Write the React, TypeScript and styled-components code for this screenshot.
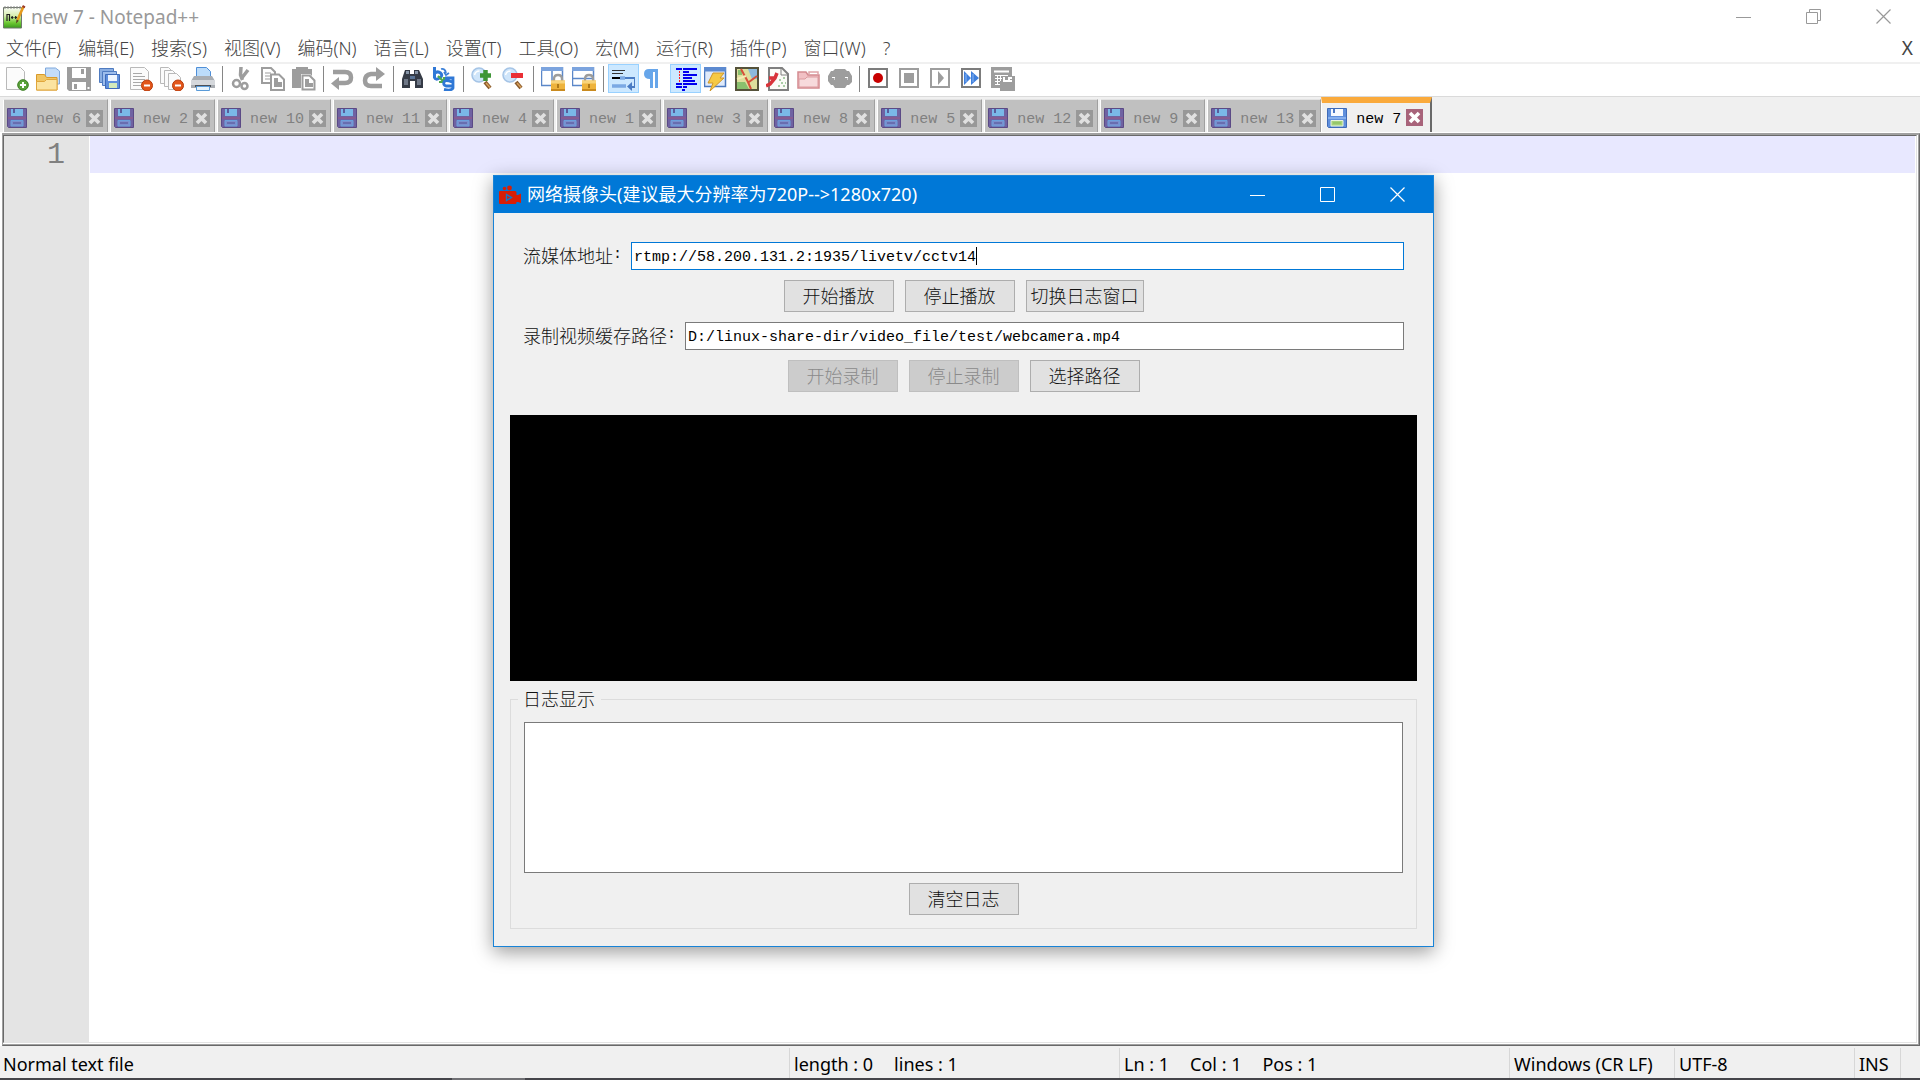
import React, { useState } from "react";
import styled, { createGlobalStyle } from "styled-components";

const uiFont = `"Noto Sans", "Noto Sans CJK SC", sans-serif`;
const cjkFont = `"Noto Sans CJK SC", sans-serif`;
const monoFont = `"Liberation Mono", "Noto Sans CJK SC", monospace`;

const GlobalStyle = createGlobalStyle`
  *, *::before, *::after { box-sizing: border-box; }
  body { margin: 0; background: #fff; }
  button, input, textarea { font: inherit; color: inherit; margin: 0; padding: 0; border: 0; border-radius: 0; outline: 0; background: none; }
  svg { display: block; }
`;

/* ---------- main window ---------- */

const Desktop = styled.div`
  position: relative;
  display: flex;
  flex-direction: column;
  min-height: 100vh;
  overflow: hidden;
  font-family: ${uiFont};
  background: #fff;
`;

const TitleBar = styled.header`
  display: flex;
  align-items: center;
  height: 36px;
  padding: 0 1px 2px 2px;
  color: #999;
`;

const WindowTitle = styled.h1`
  flex: 1;
  margin: 0;
  padding-left: 5px;
  font-size: 19px;
  font-weight: 400;
  line-height: 26px;
  white-space: nowrap;
`;

const CaptionButton = styled.button`
  display: grid;
  place-items: center;
  width: 70px;
  height: 34px;
`;

const MenuBar = styled.nav`
  display: flex;
  align-items: center;
  height: 28px;
  padding: 0 7px 2px 0;
  border-bottom: 2px solid #f0f0f0;
  font-size: 18px;
  font-weight: 300;
  color: #444;
`;

const MenuItem = styled.button`
  padding: 0 11px 0 6px;
  line-height: 24px;
  white-space: nowrap;
`;

const CloseDocument = styled.button`
  margin-left: auto;
  font-size: 19px;
  font-weight: 400;
  line-height: 24px;
`;

const ToolBar = styled.div`
  display: flex;
  height: 33px;
  padding-left: 2px;
  border-bottom: 1px solid #dadada;
`;

const ToolButton = styled.button<{ $active?: boolean }>`
  width: 31px;
  height: 29px;
  padding: 2px 3px 1px 2px;
  border: 1px solid ${(p) => (p.$active ? "#99d1ff" : "transparent")};
  background: ${(p) => (p.$active ? "#cce8ff" : "transparent")};
`;

const ToolDivider = styled.span`
  width: 1px;
  height: 26px;
  margin: 2px 4px 0 3px;
  background: #868686;
`;

const TabStrip = styled.div`
  display: flex;
  align-items: flex-end;
  height: 36px;
  padding-left: 3px;
  border-bottom: 1px solid #fff;
  background: #f0f0f0;
`;

const Tab = styled.div<{ $active?: boolean }>`
  display: flex;
  align-items: center;
  height: ${(p) => (p.$active ? 35 : 33)}px;
  margin: ${(p) => (p.$active ? "0 0 0 -2px" : "0 2px 0 0")};
  padding: ${(p) => (p.$active ? "0 7px 0 5px" : "4px 4px 0 3px")};
  border-left: 1px solid #fff;
  border-right: ${(p) => (p.$active ? "2px solid #696969" : "1px solid #a0a0a0")};
  border-top: ${(p) => (p.$active ? "6px solid #faaa3c" : "1px solid #e3e3e3")};
  background: ${(p) => (p.$active ? "#f0f0f0" : "#c0c0c0")};
`;

const TabLabel = styled.button<{ $active?: boolean }>`
  display: flex;
  align-items: center;
  gap: 9px;
  font-family: ${monoFont};
  font-size: 15px;
  line-height: 20px;
  white-space: pre;
  color: ${(p) => (p.$active ? "#000" : "#808080")};
`;

const TabName = styled.span`
  padding-top: 4px;
`;

const TabClose = styled.button`
  margin-left: 5px;
`;

const EditorFrame = styled.main`
  display: flex;
  flex: 1;
  margin-left: 2px;
  padding: 0 2px 2px 0;
  border-style: solid;
  border-width: 2px 1px 1px 1px;
  border-color: #a0a0a0 #696969 #696969 #a0a0a0;
  box-shadow: inset -1px -1px 0 #a0a0a0;
`;

const EditorPane = styled.div`
  display: flex;
  flex: 1;
  border: 1px solid;
  border-color: #696969 #e3e3e3 #e3e3e3 #696969;
`;

const Gutter = styled.div`
  width: 85px;
  padding: 1px 24px 0 0;
  background: #e4e4e4;
  color: #808080;
  font-family: ${monoFont};
  font-size: 30px;
  line-height: 37px;
  text-align: right;
`;

const EditorText = styled.textarea`
  flex: 1;
  margin: 0 1px;
  resize: none;
  background: linear-gradient(#e8e8ff 37px, #fff 37px);
  font-family: ${monoFont};
  font-size: 30px;
  line-height: 37px;
`;

const StatusBar = styled.footer`
  display: grid;
  grid-template-columns: 1fr 330px 390px 165px 180px 46px 19px;
  height: 32px;
  padding-top: 2px;
  background: #f0f0f0;
  color: #000;
  font-size: 18px;
  line-height: 32px;
`;

const StatusCell = styled.div`
  display: flex;
  gap: 21px;
  padding-left: 3px;
  border-right: 1px solid #d7d7d7;
  white-space: nowrap;
  & + & { padding-left: 4px; }
  &:last-child { border-right: 0; }
`;

const TaskBarEdge = styled.div`
  height: 2px;
  padding-left: 452px;
  background: #45454a;
  &::before { content: ""; display: block; width: 73px; height: 2px; background: #707074; }
`;

/* ---------- camera dialog ---------- */

const Dialog = styled.section`
  position: absolute;
  left: 493px;
  top: 175px;
  width: 941px;
  border: 1px solid #1883d7;
  background: #f0f0f0;
  box-shadow: 0 5px 18px rgba(0, 0, 0, 0.4);
  color: #111;
`;

const DialogTitleBar = styled.header`
  display: flex;
  align-items: center;
  height: 37px;
  padding-left: 4px;
  background: #0078d7;
  color: #fff;
`;

const DialogTitle = styled.h2`
  flex: 1;
  margin: 0;
  padding: 0 0 2px 5px;
  font-size: 18px;
  font-weight: 400;
  line-height: 26px;
  white-space: nowrap;
`;

const DialogBody = styled.div`
  display: flex;
  flex-direction: column;
  padding: 29px 16px 17px;
`;

const Form = styled.form`
  display: flex;
  flex-direction: column;
  gap: 10px;
  padding: 0 13px;
`;

const FieldRow = styled.div`
  display: flex;
  align-items: center;
  gap: 9px;
  height: 28px;
  font-family: ${monoFont};
  font-size: 15px;
`;

const FieldLabel = styled.label`
  display: flex;
  align-items: center;
  padding-bottom: 2px;
  line-height: 26px;
  white-space: nowrap;
`;

const LabelText = styled.span`
  font-family: ${cjkFont};
  font-size: 18px;
  font-weight: 300;
`;

const FieldBox = styled.div`
  position: relative;
  flex: 1;
`;

const TextInput = styled.input<{ $focused?: boolean }>`
  display: block;
  width: 100%;
  height: 28px;
  padding: 2px 2px 0;
  border: 1px solid ${(p) => (p.$focused ? "#0078d7" : "#7a7a7a")};
  background: #fff;
  color: #000;
  caret-color: transparent;
`;

const Caret = styled.span<{ $column: number }>`
  position: absolute;
  top: 5px;
  left: calc(3px + ${(p) => p.$column}ch);
  width: 1px;
  height: 18px;
  background: #000;
`;

const ButtonRow = styled.div`
  display: flex;
  justify-content: center;
  gap: 11px;
`;

const PushButton = styled.button`
  min-width: 110px;
  height: 32px;
  padding: 0 4px 2px;
  border: 1px solid #adadad;
  background: #e1e1e1;
  font-family: ${cjkFont};
  font-size: 18px;
  font-weight: 300;
  line-height: 26px;
  white-space: nowrap;
  &:disabled {
    border-color: #bfbfbf;
    background: #ccc;
    color: #8a8a8a;
  }
`;

const VideoView = styled.div`
  height: 266px;
  margin-top: 23px;
  background: #000;
`;

const LogGroup = styled.fieldset`
  display: flex;
  flex-direction: column;
  gap: 10px;
  min-width: 0;
  margin: 4px 0 0;
  padding: 9px 13px 13px;
  border: 1px solid #dcdcdc;
`;

const LogLegend = styled.legend`
  margin-left: -6px;
  padding: 0 6px 2px 5px;
  font-family: ${cjkFont};
  font-size: 18px;
  font-weight: 300;
  line-height: 26px;
`;

const LogText = styled.textarea`
  display: block;
  width: 100%;
  height: 151px;
  border: 1px solid #7a7a7a;
  background: #fff;
  resize: none;
`;

/* ---------- icons ---------- */

const Glyph = ({ size = 24, children }: { size?: number; children: React.ReactNode }) => (
  <svg width={size} height={size} viewBox={`0 0 ${size} ${size}`} fill="none" aria-hidden="true">
    {children}
  </svg>
);

const MinimizeIcon = () => (
  <Glyph size={16}><path d="M0 8.5H15" stroke="currentColor" /></Glyph>
);
const MaximizeIcon = () => (
  <Glyph size={16}><path d="M.5.5h14v14H.5z" stroke="currentColor" /></Glyph>
);
const RestoreIcon = () => (
  <Glyph size={16}><path d="M.5 3.5h11v11H.5zM3.5 3.5v-3h11v11h-3" stroke="currentColor" /></Glyph>
);
const CloseIcon = () => (
  <Glyph size={16}><path d="M.5.5l14 14M14.500.5l-14 14" stroke="currentColor" strokeWidth="1.2" /></Glyph>
);

const NotepadLogo = () => (
  <Glyph size={24}>
    <defs>
      <linearGradient id="padGreen" x1="0" y1="0" x2="0" y2="1">
        <stop offset="0" stopColor="#f8fbf4" />
        <stop offset=".4" stopColor="#d8efb0" />
        <stop offset=".75" stopColor="#6cc832" />
        <stop offset="1" stopColor="#3a9a1c" />
      </linearGradient>
    </defs>
    <path d="M1.500 2.500h18v20.500h-18z" fill="url(#padGreen)" stroke="#6f776b" />
    <path d="M3 1v3M6 1v3M9 1v3M12 1v3M15 1v3M18 1v3" stroke="#8d8d8d" />
    <path d="M5 16V9.500h2.500V16M9 12.500h2.500M10.200 11v3M12.500 12.500h2.500M13.700 11v3" stroke="#222" strokeWidth="1.200" />
    <path d="M21.500 1.500L15.500 15" stroke="#e69b1e" strokeWidth="2.600" />
    <path d="M20.500 1l2.500 1.300" stroke="#9b3a2a" strokeWidth="2" />
    <path d="M14 18.500l.5-4 2.300 1.200z" fill="#5a4020" />
  </Glyph>
);

const CameraLogo = () => (
  <Glyph size={24}>
    <circle cx="6.500" cy="5.500" r="1.800" fill="#d81e06" />
    <circle cx="11.500" cy="5" r="2.400" fill="#d81e06" />
    <path d="M2 8h15q1.500 0 1.500 1.500V12h1.500l3-1.500v9.500l-3-1h-1.500v.500q0 1.500-1.500 1.500H2q-1 0-1-1V9q0-1 1-1z" fill="#d81e06" />
    <path d="M8.500 11.500v6l5-3z" stroke="#1478c8" strokeWidth="1.400" />
  </Glyph>
);

const Floppy = ({ active }: { active?: boolean }) => (
  <Glyph size={20}>
    <path d="M.5.5h19v19H1.500l-1-1z" fill={active ? "#5f8fdc" : "#6f62a2"} stroke={active ? "#3f6bb8" : "#5b4a86"} />
    <path d="M4 1h12v7H4z" fill={active ? "#f6faff" : "#7ab8e8"} />
    <path d="M6 1h2v4H6z" fill={active ? "#4c78c4" : "#5a5c9c"} />
    <path d="M1 9h18v2H1z" fill={active ? "#86b0ee" : "#855c92"} />
    <path d="M4 12.500h12V18H4z" fill={active ? "#a6d27c" : "#7a8fce"} stroke={active ? "#e9f4dc" : "#6aa0dc"} />
    <path d="M6 15h8" stroke={active ? "#86bb58" : "#574c90"} />
  </Glyph>
);

const TabCross = ({ active }: { active?: boolean }) => (
  <Glyph size={17}>
    <path d="M0 0h17v17H0z" fill={active ? "#a8637a" : "#989898"} />
    <path d="M4 4l9 9M13 4l-9 9" stroke={active ? "#fff" : "#e0e0e0"} strokeWidth="3.600" />
  </Glyph>
);

const sheet = (x: number, y: number, w: number, h: number) => (
  <path d={`M${x + 0.5} ${y + 0.5}h${w - 5}l4 4v${h - 5}h-${w - 1}z`} fill="#fbfbfb" stroke="#b9b9b9" />
);

const minusBadge = (
  <>
    <circle cx="18" cy="18.500" r="5.500" fill="#e2561b" stroke="#b83c0c" />
    <path d="M15 18.500h6" stroke="#fff" strokeWidth="2" />
  </>
);

const lens = (
  <>
    <path d="M14 15l5 6" stroke="#8a5a2b" strokeWidth="4" />
    <path d="M15 16l4 4.500" stroke="#d8a25e" strokeWidth="1.500" />
    <circle cx="8" cy="8" r="7" fill="#cfe5fa" stroke="#a5c4e6" strokeWidth="1.500" />
    <path d="M3.500 8q1-4 5-4" stroke="#fff" strokeWidth="1.500" />
  </>
);

const lock = (
  <>
    <path d="M13 15v-3q0-4 4-4t4 4v3" stroke="#9c9c9c" strokeWidth="2.300" />
    <path d="M10 13.500h14V24H10z" fill="#eeb33c" />
    <path d="M10 13.500h14v3H10z" fill="#f8d47c" />
    <path d="M10 22h14v2H10z" fill="#c98a1e" />
    <path d="M17 17v4" stroke="#b07a18" strokeWidth="2" />
  </>
);

const frameBox = (color: string) => (
  <path d="M2 2h18v18H2z" fill="#fff" stroke={color} strokeWidth="2" />
);

const toolIcons: Record<string, React.ReactNode> = {
  new: (
    <>
      {sheet(1, 0, 19, 23)}
      <circle cx="18" cy="18" r="5.300" fill="#5aa13a" stroke="#3b7d22" />
      <path d="M15 18h6M18 15v6" stroke="#fff" strokeWidth="2" />
    </>
  ),
  open: (
    <>
      <path d="M9.500 1h10l4 3v13h-14z" fill="#c4dcf8" stroke="#7fa8dc" />
      <path d="M.5 7.500h8l2 3H21V23H.5z" fill="#f0c564" stroke="#d99a2b" />
      <path d="M.5 14.500h8l2-2h10.500V23H.5z" fill="#fbe3a0" stroke="#e0a63c" />
    </>
  ),
  save: (
    <>
      <path d="M0 0h24v24H2l-2-2z" fill="#9d9d9d" />
      <path d="M5 1h14v10H5zM5 15h14v8H5z" fill="#fff" />
      <path d="M14 2h3v5h-3zM7 17h3v5H7z" fill="#9d9d9d" />
      <path d="M20.500 20h2v2h-2z" fill="#fff" />
    </>
  ),
  saveAll: (
    <>
      <path d="M1.500 1.500h14v14h-14z" fill="#8aaee2" stroke="#4f7bc0" />
      <path d="M4.500 4.500h14v14h-14z" fill="#9dbdec" stroke="#4f7bc0" />
      <path d="M7.500 7.500h14v14h-14z" fill="#5f8fdc" stroke="#3f6bb8" />
      <path d="M10 8h9v6h-9z" fill="#eef5ff" />
      <path d="M11 16h8v5h-8z" fill="#d4ebbb" />
    </>
  ),
  close: (
    <>
      {sheet(1, 0, 19, 23)}
      <path d="M4 6.500h9M4 9.500h12M4 12.500h12M4 15.500h9M4 18.500h8" stroke="#a8a8a8" />
      {minusBadge}
    </>
  ),
  closeAll: (
    <>
      {sheet(0, 0, 13, 17)}
      {sheet(4, 3, 13, 17)}
      {sheet(8, 6, 13, 17)}
      {minusBadge}
    </>
  ),
  print: (
    <>
      <path d="M5.500.5h10l4 4V12h-14z" fill="#bcdcfa" stroke="#4f8fd8" />
      <path d="M3 9h18l3 5v7H0v-7z" fill="#a9adb2" />
      <path d="M0 13h24v5H0z" fill="#d5d8dc" />
      <path d="M4 18h16v2H4z" fill="#4c5056" />
      <path d="M5.500 19.500h13v4h-13z" fill="#e6f3fd" stroke="#5a9bd8" />
    </>
  ),
  cut: (
    <>
      <path d="M11 0l-.5 8 2 5M18 3l-7 9" stroke="#9d9d9d" strokeWidth="3.500" />
      <circle cx="6.500" cy="16.500" r="3.500" stroke="#9d9d9d" strokeWidth="2.500" />
      <circle cx="14.500" cy="19" r="3" stroke="#9d9d9d" strokeWidth="2.500" />
    </>
  ),
  copy: (
    <>
      <path d="M1 1h9l4 4v11H1z" fill="#fff" stroke="#9d9d9d" strokeWidth="2" />
      <path d="M4 6h6M4 9h6M4 12h6" stroke="#9d9d9d" />
      <path d="M10 7.500h8l5 5V23H10z" fill="#fff" stroke="#9d9d9d" strokeWidth="2" />
      <path d="M13 11h4v4h4v5h-8z" fill="#9d9d9d" />
    </>
  ),
  paste: (
    <>
      <path d="M0 2h4V0h12v2h4v19H0z" fill="#9d9d9d" />
      <path d="M9 7h9l6 6v11H9z" fill="#fff" />
      <path d="M10.500 8.500h7l5 5v9h-12z" stroke="#9d9d9d" strokeWidth="2" />
      <path d="M13 12h4v4h4v4h-8z" fill="#9d9d9d" />
    </>
  ),
  undo: (
    <>
      <path d="M2 5h12q6 0 6 5.500T14 16H7" stroke="#9d9d9d" strokeWidth="4.500" />
      <path d="M8 10v13l-8-6.500z" fill="#9d9d9d" />
    </>
  ),
  redo: (
    <>
      <path d="M20 19H9q-6 0-6-5.500T9 7h6" stroke="#9d9d9d" strokeWidth="4.500" />
      <path d="M14 0v14l9-7z" fill="#9d9d9d" />
    </>
  ),
  find: (
    <>
      <path d="M4 3h5v4h4V3h5l4 9v9h-8v-7H9v7H1v-9z" fill="#353b46" />
      <path d="M5 4h3v3H5zM14 4h3v3h-3z" fill="#8795a8" />
      <path d="M3 12h4v6H3zM16 12h4v6h-4z" fill="#6f7887" />
      <path d="M9 9h5v3H9z" fill="#5a7496" />
    </>
  ),
  replace: (
    <>
      <path d="M2.500 0v11M2.500 6.500q3-3 6-.5t-1 5-5-.5" stroke="#2f78d6" strokeWidth="3" />
      <path d="M9 2q4-1 5 4M12 5l2 3 3-2" stroke="#3a7fd8" strokeWidth="1.800" />
      <path d="M6 9l6 6M12 10v5H7" stroke="#4faa4f" strokeWidth="2.200" />
      <path d="M13 11h8v10q-1 3-9 1.500M20 19h-6q-3-1-2-4t8 0" stroke="#2f78d6" strokeWidth="2.800" />
    </>
  ),
  zoomIn: (
    <>
      {lens}
      <path d="M14.500 3v11M9 8.500h11" stroke="#3f9637" strokeWidth="4.500" />
    </>
  ),
  zoomOut: (
    <>
      {lens}
      <path d="M9 8.500h12" stroke="#ea2f35" strokeWidth="5" />
    </>
  ),
  syncV: (
    <>
      <path d="M.5.5h21v18H.5zM11 4v14" fill="#fff" stroke="#5b87c8" strokeWidth="1.500" />
      <path d="M0 0h22v4H0z" fill="#7ca4de" />
      {lock}
    </>
  ),
  syncH: (
    <>
      <path d="M.5.5h21v18H.5zM1 11.500h20" fill="#fff" stroke="#5b87c8" strokeWidth="1.500" />
      <path d="M0 0h22v4H0z" fill="#7ca4de" />
      {lock}
    </>
  ),
  wrap: (
    <>
      <path d="M1 3.500h13M1 6.500h11" stroke="#333" />
      <path d="M1 11h8" stroke="#000" strokeWidth="2" />
      <path d="M9 11h5M1 19h14" stroke="#7ba9e4" strokeWidth="3.500" />
      <path d="M14 11h10v9h-5" stroke="#4a7cc4" strokeWidth="2" />
      <path d="M21 15v9l-5-4.500z" fill="#4a7cc4" />
    </>
  ),
  pilcrow: (
    <path d="M7 2h9v19h-3V5h-2v16H8v-9q-6 0-6-5t5-5z" fill="#67a6ea" />
  ),
  indent: (
    <>
      <path d="M3 2h6M10 2h14M10 5h6M10 8h14M10 11h9M10 14h12M3 17h6M10 17h14M3 20h6M10 20h4M9 23h3" stroke="#0000f0" strokeWidth="2.200" />
      <path d="M6.500 4v12" stroke="#f22" strokeDasharray="2 1" />
    </>
  ),
  language: (
    <>
      <path d="M.5.5h21v19H.5z" fill="#dfeafa" stroke="#4a78be" strokeWidth="1.500" />
      <path d="M0 0h22v4.500H0z" fill="#5c8ad0" />
      <path d="M9 6h11l-4 5h4L6 24l3-8H4z" fill="#f6c944" stroke="#cf962a" />
    </>
  ),
  map: (
    <>
      <path d="M1 1h22v22H1z" fill="#dede9c" stroke="#55523a" strokeWidth="2" />
      <path d="M13 2h9v10h-5z" fill="#8db9dc" />
      <path d="M2 15h8l4 7H2zM3 3h4v5H3z" fill="#8ac06e" />
      <path d="M6 2l7 13 3 7M14 15l8-6" stroke="#d6503a" strokeWidth="2" />
      <path d="M2 12l9-3" stroke="#f4edb4" strokeWidth="2" />
    </>
  ),
  functions: (
    <>
      <path d="M3 1h13l6 6v16H3z" fill="#fbfbf7" stroke="#808080" strokeWidth="2" />
      <path d="M15 1v7h7" stroke="#808080" />
      <path d="M11 6l-2 5-5 6-4 2M3 11h7" stroke="#d8343a" strokeWidth="3.500" />
      <path d="M13 13h2M17 11h2M15 16h2M19 16h1M12 19h2M17 19h2" stroke="#8fbe8a" strokeWidth="1.500" />
    </>
  ),
  folder: (
    <>
      <path d="M1 5h8l2 3h11v13H1z" fill="#f1c0c4" stroke="#d48a90" strokeWidth="1.500" />
      <path d="M12 7V5h9v3" stroke="#e0a5a9" strokeWidth="1.500" />
      <path d="M2 12h6l2-2h11v10H2z" fill="#f7dadc" stroke="#dc9ba0" />
    </>
  ),
  monitor: (
    <>
      <path d="M7 2h10l2 2h2l3 5v6l-3 3h-2l-2 3H7l-2-3H3l-3-4V9l3-5h2z" fill="#9d9d9d" />
      <path d="M4 10.500h3M17 10.500h3M6 12h1M19 12h1" stroke="#fff" />
    </>
  ),
  record: (
    <>
      {frameBox("#7c7c7c")}
      <circle cx="11" cy="11" r="5" fill="#c80000" />
    </>
  ),
  stop: (
    <>
      {frameBox("#9d9d9d")}
      <path d="M6 6h10v10H6z" fill="#9d9d9d" />
    </>
  ),
  play: (
    <>
      {frameBox("#9d9d9d")}
      <path d="M9 4l6 7-6 7z" fill="#9d9d9d" />
    </>
  ),
  playMany: (
    <>
      {frameBox("#7c7c7c")}
      <path d="M4 4l7 7-7 7zM11 4l8 7-8 7z" fill="#3f7fdc" />
      <path d="M6 7v8M13 7v8" stroke="#8db8f2" />
    </>
  ),
  saveMacro: (
    <>
      <path d="M0 0h21v9h3v15H9v-3H0z" fill="#9d9d9d" />
      <path d="M3 4.500h15" stroke="#fff" strokeWidth="2" />
      <path d="M4 8.500h13M4 11.500h7M4 14.500h5M4 17.500h5M6.500 8v10M9.500 8v6" stroke="#fff" />
      <path d="M12 10h9v5h-9z" fill="#fff" />
      <path d="M14 10h3v3h-3zM19 12h2v1h-2z" fill="#9d9d9d" />
    </>
  ),
};

const toolGroups: { name: string; label: string; active?: boolean }[][] = [
  [
    { name: "new", label: "新建" },
    { name: "open", label: "打开" },
    { name: "save", label: "保存" },
    { name: "saveAll", label: "保存所有" },
    { name: "close", label: "关闭" },
    { name: "closeAll", label: "关闭所有" },
    { name: "print", label: "打印" },
  ],
  [
    { name: "cut", label: "剪切" },
    { name: "copy", label: "复制" },
    { name: "paste", label: "粘贴" },
  ],
  [
    { name: "undo", label: "撤销" },
    { name: "redo", label: "重做" },
  ],
  [
    { name: "find", label: "查找" },
    { name: "replace", label: "替换" },
  ],
  [
    { name: "zoomIn", label: "放大" },
    { name: "zoomOut", label: "缩小" },
  ],
  [
    { name: "syncV", label: "同步垂直滚动" },
    { name: "syncH", label: "同步水平滚动" },
  ],
  [
    { name: "wrap", label: "自动换行", active: true },
    { name: "pilcrow", label: "显示所有字符" },
    { name: "indent", label: "显示缩进参考线", active: true },
    { name: "language", label: "自定义语言" },
    { name: "map", label: "文档结构图" },
    { name: "functions", label: "函数列表" },
    { name: "folder", label: "文件夹工作区" },
    { name: "monitor", label: "监视日志" },
  ],
  [
    { name: "record", label: "开始录制宏" },
    { name: "stop", label: "停止录制宏" },
    { name: "play", label: "播放宏" },
    { name: "playMany", label: "多次运行宏" },
    { name: "saveMacro", label: "保存宏" },
  ],
];

const menus = [
  "文件(F)", "编辑(E)", "搜索(S)", "视图(V)", "编码(N)", "语言(L)", "设置(T)",
  "工具(O)", "宏(M)", "运行(R)", "插件(P)", "窗口(W)", "?",
];

const tabs = [6, 2, 10, 11, 4, 1, 3, 8, 5, 12, 9, 13, 7];
const currentTab = 7;

function CameraDialog() {
  const [address, setAddress] = useState("rtmp://58.200.131.2:1935/livetv/cctv14");
  const [path, setPath] = useState("D:/linux-share-dir/video_file/test/webcamera.mp4");

  return (
    <Dialog role="dialog" aria-labelledby="camera-title">
      <DialogTitleBar>
        <CameraLogo />
        <DialogTitle id="camera-title">网络摄像头(建议最大分辨率为720P--&gt;1280x720)</DialogTitle>
        <CaptionButton aria-label="最小化"><MinimizeIcon /></CaptionButton>
        <CaptionButton aria-label="最大化"><MaximizeIcon /></CaptionButton>
        <CaptionButton aria-label="关闭"><CloseIcon /></CaptionButton>
      </DialogTitleBar>
      <DialogBody>
        <Form onSubmit={(e) => e.preventDefault()}>
          <FieldRow>
            <FieldLabel htmlFor="address"><LabelText>流媒体地址</LabelText>:</FieldLabel>
            <FieldBox>
              <TextInput id="address" $focused value={address} onChange={(e) => setAddress(e.target.value)} />
              <Caret $column={address.length} />
            </FieldBox>
          </FieldRow>
          <ButtonRow>
            <PushButton type="button">开始播放</PushButton>
            <PushButton type="button">停止播放</PushButton>
            <PushButton type="button">切换日志窗口</PushButton>
          </ButtonRow>
          <FieldRow>
            <FieldLabel htmlFor="path"><LabelText>录制视频缓存路径</LabelText>:</FieldLabel>
            <FieldBox>
              <TextInput id="path" value={path} onChange={(e) => setPath(e.target.value)} />
            </FieldBox>
          </FieldRow>
          <ButtonRow>
            <PushButton type="button" disabled>开始录制</PushButton>
            <PushButton type="button" disabled>停止录制</PushButton>
            <PushButton type="button">选择路径</PushButton>
          </ButtonRow>
        </Form>
        <VideoView />
        <LogGroup>
          <LogLegend>日志显示</LogLegend>
          <LogText aria-label="日志显示" readOnly />
          <ButtonRow>
            <PushButton type="button">清空日志</PushButton>
          </ButtonRow>
        </LogGroup>
      </DialogBody>
    </Dialog>
  );
}

export default function App() {
  return (
    <Desktop>
      <GlobalStyle />
      <TitleBar>
        <NotepadLogo />
        <WindowTitle>new 7 - Notepad++</WindowTitle>
        <CaptionButton aria-label="最小化"><MinimizeIcon /></CaptionButton>
        <CaptionButton aria-label="还原"><RestoreIcon /></CaptionButton>
        <CaptionButton aria-label="关闭"><CloseIcon /></CaptionButton>
      </TitleBar>
      <MenuBar>
        {menus.map((label) => (
          <MenuItem key={label}>{label}</MenuItem>
        ))}
        <CloseDocument>X</CloseDocument>
      </MenuBar>
      <ToolBar>
        {toolGroups.map((group, index) => (
          <React.Fragment key={group[0].name}>
            {index > 0 && <ToolDivider />}
            {group.map((tool) => (
              <ToolButton key={tool.name} $active={tool.active} aria-label={tool.label}>
                <Glyph>{toolIcons[tool.name]}</Glyph>
              </ToolButton>
            ))}
          </React.Fragment>
        ))}
      </ToolBar>
      <TabStrip>
        {tabs.map((n) => (
          <Tab key={n} $active={n === currentTab}>
            <TabLabel $active={n === currentTab}>
              <Floppy active={n === currentTab} />
              <TabName>{`new ${n}`}</TabName>
            </TabLabel>
            <TabClose aria-label={`关闭 new ${n}`}>
              <TabCross active={n === currentTab} />
            </TabClose>
          </Tab>
        ))}
      </TabStrip>
      <EditorFrame>
        <EditorPane>
          <Gutter>1</Gutter>
          <EditorText aria-label="new 7" />
        </EditorPane>
      </EditorFrame>
      <StatusBar>
        <StatusCell>Normal text file</StatusCell>
        <StatusCell><span>length : 0</span><span>lines : 1</span></StatusCell>
        <StatusCell><span>Ln : 1</span><span>Col : 1</span><span>Pos : 1</span></StatusCell>
        <StatusCell>Windows (CR LF)</StatusCell>
        <StatusCell>UTF-8</StatusCell>
        <StatusCell>INS</StatusCell>
        <StatusCell />
      </StatusBar>
      <TaskBarEdge />
      <CameraDialog />
    </Desktop>
  );
}
